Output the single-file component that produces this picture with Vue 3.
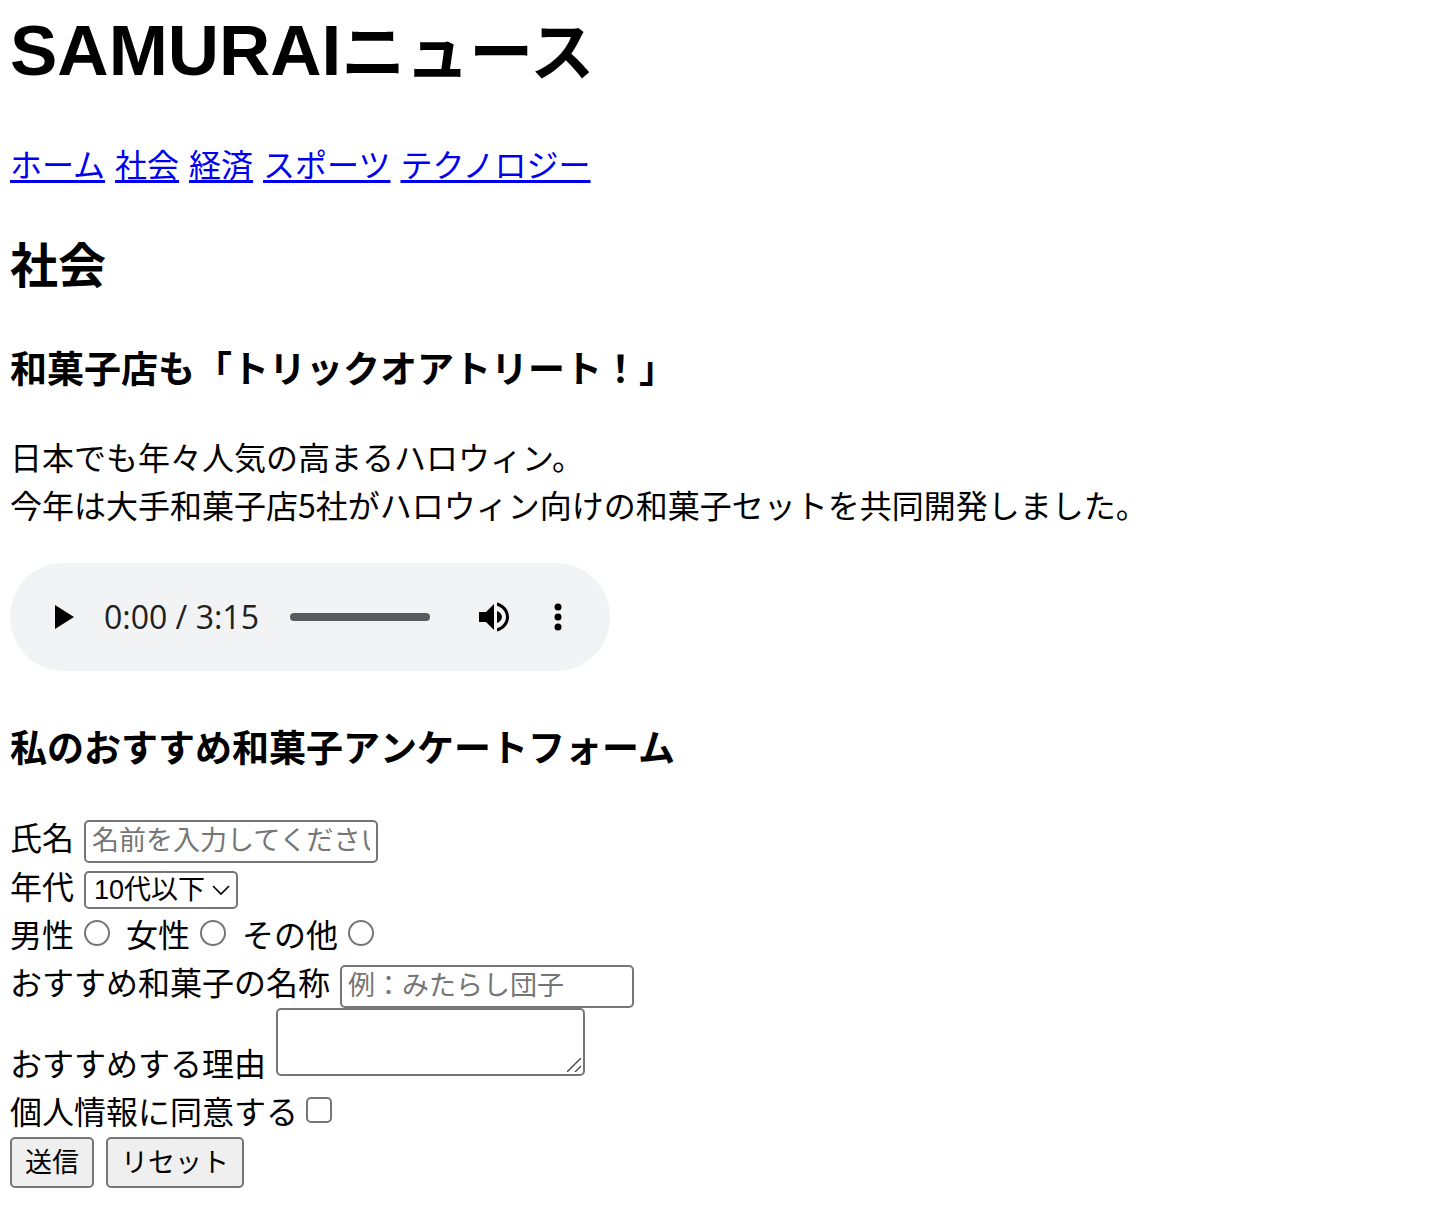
<script setup>
import { ref } from 'vue'

const links = ['ホーム', '社会', '経済', 'スポーツ', 'テクノロジー']
const genders = [
  { id: 'male', label: '男性' },
  { id: 'female', label: '女性' },
  { id: 'other', label: 'その他' },
]
const ages = ['10代以下', '20代', '30代', '40代', '50代', '60代以上']

const name = ref('')
const age = ref(ages[0])
const gender = ref('')
const sweet = ref('')
const reason = ref('')
const agreed = ref(false)
const position = ref(0)
</script>

<template>
  <div class="page">
    <header>
      <h1><span class="latin">SAMURAI</span>ニュース</h1>
      <nav>
        <a v-for="link in links" :key="link" href="#">{{ link }}</a>
      </nav>
    </header>

    <main>
      <h2>社会</h2>
      <article>
        <h3>和菓子店も「トリックオアトリート！」</h3>
        <p>
          日本でも年々人気の高まるハロウィン。<br />今年は大手和菓子店5社がハロウィン向けの和菓子セットを共同開発しました。
        </p>
        <div class="player">
          <button type="button" class="icon play" aria-label="再生">
            <svg width="40" height="40" viewBox="0 0 20 20"><path d="M6 4v12l9.5-6z" /></svg>
          </button>
          <span class="time">0:00 / 3:15</span>
          <input v-model="position" class="seek" type="range" min="0" max="195" aria-label="再生位置" />
          <button type="button" class="icon volume" aria-label="音量">
            <svg width="30" height="30" viewBox="0 0 30 30">
              <path d="M0 10h7l8-8v26l-8-8H0z" />
              <path d="M18 9c3 1 5 3.500 5 6s-2 5-5 6z" />
              <path d="M18 .5c7 1.500 12 7.500 12 14.500s-5 13-12 14.500v-3.200c5-1.500 9-6 9-11.300s-4-9.800-9-11.300z" />
            </svg>
          </button>
          <button type="button" class="icon more" aria-label="その他のオプション">
            <svg width="8" height="30" viewBox="0 0 8 30">
              <circle cx="4" cy="5" r="3.5" />
              <circle cx="4" cy="15" r="3.5" />
              <circle cx="4" cy="25" r="3.5" />
            </svg>
          </button>
        </div>
      </article>

      <section>
        <h3 class="form-title">私のおすすめ和菓子アンケートフォーム</h3>
        <form @submit.prevent>
          <div class="row">
            <label for="name">氏名</label>
            <input id="name" v-model="name" class="field text" type="text" placeholder="名前を入力してください" />
          </div>
          <div class="row">
            <label for="age">年代</label>
            <span class="select-box">
              <select id="age" v-model="age" class="field">
                <option v-for="a in ages" :key="a">{{ a }}</option>
              </select>
              <svg class="chevron" width="18" height="12" viewBox="0 0 18 12"><path d="M1 2l8 8 8-8" /></svg>
            </span>
          </div>
          <div class="row choices">
            <span v-for="g in genders" :key="g.id" class="choice">
              <label :for="g.id">{{ g.label }}</label>
              <input :id="g.id" v-model="gender" class="tick round" type="radio" name="gender" :value="g.id" />
            </span>
          </div>
          <div class="row">
            <label for="sweet">おすすめ和菓子の名称</label>
            <input id="sweet" v-model="sweet" class="field text" type="text" placeholder="例：みたらし団子" />
          </div>
          <div class="row reason">
            <label for="reason">おすすめする理由</label>
            <span class="area-box">
              <textarea id="reason" v-model="reason" class="field"></textarea>
              <svg class="grip" width="14" height="14" viewBox="0 0 14 14"><path d="M0 14L14 0M8 14l6-6" /></svg>
            </span>
          </div>
          <div class="row choice agree">
            <label for="agree">個人情報に同意する</label>
            <input id="agree" v-model="agreed" class="tick" type="checkbox" />
          </div>
          <div class="buttons">
            <button type="submit">送信</button>
            <button type="reset">リセット</button>
          </div>
        </form>
      </section>
    </main>
  </div>
</template>

<style>
body {
  background: #fff;
}
</style>

<style scoped>
.page {
  padding: 0 10px 20px;
  color: #000;
  font-family: "Noto Sans CJK JP", sans-serif;
  font-size: 32px;
  line-height: 48px;
}

h1,
h2,
h3,
p {
  margin: 0;
}

h1 {
  font-size: 64px;
  line-height: 94px;
}

.latin {
  font-family: "Liberation Sans", sans-serif;
  font-size: 71px;
  line-height: 72px;
}

nav {
  display: flex;
  gap: 10px;
  margin-top: 45px;
}

a {
  color: #0000ee;
  text-decoration-thickness: 3px;
  text-underline-offset: 3px;
  text-decoration-skip-ink: none;
}

h2 {
  margin-top: 43px;
  font-size: 48px;
  line-height: 64px;
}

h3 {
  margin-top: 49px;
  font-size: 37px;
  line-height: 48px;
}

p {
  margin-top: 41px;
}

.player {
  display: flex;
  align-items: center;
  box-sizing: border-box;
  width: 600px;
  height: 108px;
  margin-top: 35px;
  padding: 0 48px 0 33px;
  border-radius: 54px;
  background: #f1f3f4;
}

.icon {
  display: flex;
  padding: 0;
  border: 0;
  background: none;
}

.time {
  flex: 1;
  margin-left: 21px;
  color: #202020;
  font-family: "Open Sans", sans-serif;
  font-size: 32px;
  white-space: nowrap;
}

.seek {
  width: 140px;
  height: 8px;
  margin: 0;
  border-radius: 4px;
  background: #5a5a5a;
  appearance: none;
}

.seek::-webkit-slider-thumb {
  width: 8px;
  height: 8px;
  appearance: none;
  background: transparent;
}

.volume {
  margin-left: 49px;
}

.more {
  margin-left: 45px;
}

.form-title {
  margin-top: 51px;
}

form {
  margin-top: 42px;
}

.row {
  display: flex;
  align-items: flex-start;
  gap: 10px;
}

.field {
  box-sizing: border-box;
  margin: 0;
  border: 2px solid #767676;
  border-radius: 5px;
  background: #fff;
  color: #000;
  font-family: inherit;
  font-size: 27px;
}

.text {
  width: 294px;
  height: 43px;
  margin: 8px 0 -2px;
  padding: 0 6px 6px;
}

.text::placeholder {
  color: #757575;
}

.select-box,
.area-box {
  position: relative;
  display: flex;
}

.select-box {
  margin-top: 10px;
}

select.field {
  width: 154px;
  height: 38px;
  padding: 0 8px;
  font-family: "Liberation Sans", "Noto Sans CJK JP", sans-serif;
  appearance: none;
}

.chevron,
.grip {
  position: absolute;
  fill: none;
  stroke: #000;
  stroke-width: 1.6;
  pointer-events: none;
}

.chevron {
  top: 13px;
  right: 8px;
}

.grip {
  right: 4px;
  bottom: 4px;
  stroke: #444;
  stroke-width: 1.4;
}

.choices {
  gap: 16px;
}

.choice {
  display: flex;
  align-items: center;
  gap: 10px;
}

.agree {
  gap: 8px;
}

.tick {
  box-sizing: border-box;
  width: 26px;
  height: 26px;
  margin: 0;
  border: 2px solid #767676;
  border-radius: 5px;
  background: #fff;
  appearance: none;
}

.round {
  border-radius: 50%;
}

.tick:checked {
  background: #0075ff;
}

.reason {
  align-items: flex-end;
  padding-top: 2px;
}

textarea.field {
  width: 309px;
  height: 68px;
  margin-bottom: 10px;
  padding: 4px;
  resize: none;
}

.area-box .grip {
  bottom: 14px;
}

.buttons {
  display: flex;
  gap: 12px;
  margin-top: 3px;
}

.buttons button {
  height: 51px;
  padding: 0 13px 4px;
  border: 2px solid #767676;
  border-radius: 5px;
  background: #efefef;
  color: #000;
  font-family: inherit;
  font-size: 27px;
}
</style>
